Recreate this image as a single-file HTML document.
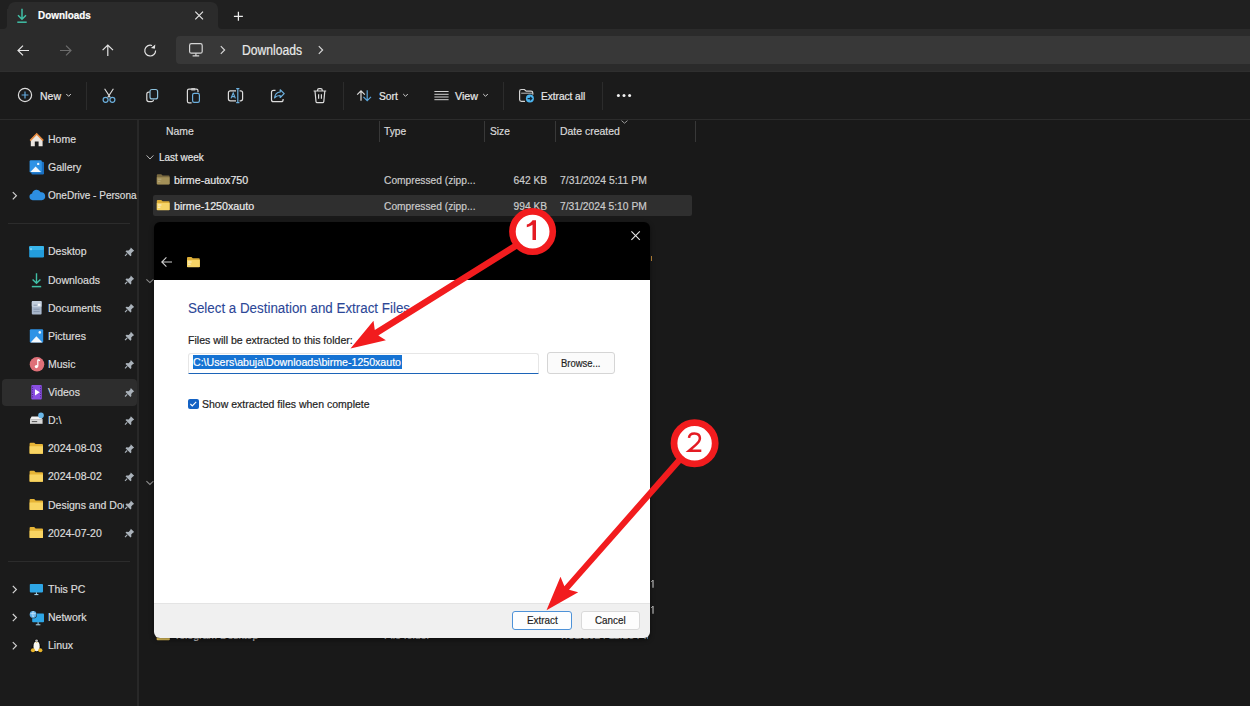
<!DOCTYPE html>
<html><head><meta charset="utf-8"><style>
html,body{margin:0;padding:0;width:1250px;height:706px;overflow:hidden;background:#191919;}
body{position:relative;font-family:"Liberation Sans", sans-serif;}
.r{position:absolute;}
.t{position:absolute;line-height:1;white-space:nowrap;transform-origin:left center;-webkit-text-stroke:0.2px currentColor;}
</style></head><body>
<div class="r" style="left:0px;top:0px;width:1250px;height:72px;background:#2b2b2b;"></div>
<div class="r" style="left:0px;top:0px;width:1250px;height:2px;background:#202020;"></div>
<div class="r" style="left:0px;top:0px;width:7px;height:29px;background:#202020;border-bottom-right-radius:4px;"></div>
<div class="r" style="left:217.5px;top:0px;width:1032.5px;height:29px;background:#202020;border-bottom-left-radius:4px;"></div>
<div class="r" style="left:7px;top:0px;width:8px;height:9px;background:#202020;"></div>
<div class="r" style="left:210px;top:0px;width:8px;height:9px;background:#202020;"></div>
<div class="r" style="left:8px;top:2px;width:209.5px;height:27px;background:#2b2b2b;border-radius:7px 7px 0 0;"></div>
<div class="r" style="left:0px;top:71px;width:1250px;height:1px;background:#2f2f2f;"></div>
<div class="r" style="left:176px;top:36px;width:1074px;height:28px;background:#383838;border-radius:4px 0 0 4px;"></div>
<div class="r" style="left:0px;top:72px;width:1250px;height:48px;background:#1b1b1b;"></div>
<div class="r" style="left:0px;top:119px;width:1250px;height:1.2px;background:#2c2c2c;"></div>
<div class="r" style="left:0px;top:120.2px;width:137px;height:586px;background:#1b1b1b;"></div>
<div class="r" style="left:137px;top:120.2px;width:1.8px;height:586px;background:#282828;"></div>
<div class="r" style="left:138.8px;top:120.2px;width:1111.2px;height:586px;background:#191919;"></div>
<svg class="r" style="left:15px;top:6px;" width="14" height="18" viewBox="0 0 14 18"><path d="M7 2.8v10.5M3 9.2L7 13.2l4-4" stroke="#40bfa6" stroke-width="1.5" fill="none"/><path d="M2.3 16.2h9.4" stroke="#40bfa6" stroke-width="1.5"/></svg>
<div class="t" style="left:38.40px;top:10.29px;font-size:11px;color:#ffffff;font-weight:700;transform:scaleX(0.8999);">Downloads</div>
<svg class="r" style="left:0;top:0;" width="1250" height="706" viewBox="0 0 1250 706"><path d="M195.3 11.7l7.7 7.7M203 11.7l-7.7 7.7" stroke="#e8e8e8" stroke-width="1.15"/><path d="M238.4 11.8v9M233.9 16.3h9" stroke="#ececec" stroke-width="1.25"/></svg>
<svg class="r" style="left:0;top:0;" width="1250" height="706" viewBox="0 0 1250 706"><path d="M18 50.5h11M23 45.6L18 50.5l5 4.9" stroke="#e4e4e4" stroke-width="1.2" fill="none"/><path d="M60 50.5h11M66 45.6l5 4.9-5 4.9" stroke="#6c6c6c" stroke-width="1.2" fill="none"/><path d="M107.8 56V45M102.6 50.2l5.2-5.2 5.2 5.2" stroke="#e4e4e4" stroke-width="1.2" fill="none"/><path d="M155.6 50.4A5.4 5.4 0 1 1 152 45.5" stroke="#e4e4e4" stroke-width="1.2" fill="none"/><polygon points="155.3,44.6 154.9,48.8 150.9,48" fill="#e4e4e4"/><rect x="189.6" y="43.6" width="12.6" height="9.6" rx="1.8" stroke="#d6d6d6" stroke-width="1.2" fill="none"/><path d="M195.9 53.2v2.2M192.6 55.8h6.6" stroke="#d6d6d6" stroke-width="1.2"/><path d="M220.8 46.2l3.8 3.8-3.8 3.8" stroke="#d6d6d6" stroke-width="1.2" fill="none"/><path d="M318.8 46.2l3.8 3.8-3.8 3.8" stroke="#d6d6d6" stroke-width="1.2" fill="none"/></svg>
<div class="t" style="left:241.70px;top:43.15px;font-size:14px;color:#e8e8e8;transform:scaleX(0.8691);">Downloads</div>
<svg class="r" style="left:0;top:0;" width="1250" height="706" viewBox="0 0 1250 706"><circle cx="25" cy="95" r="6.6" stroke="#dcdcdc" stroke-width="1.2" fill="none"/><path d="M25 91.6v6.8M21.6 95h6.8" stroke="#62a8dc" stroke-width="1.2"/><path d="M66.3 94l2.3 2.3 2.3-2.3" stroke="#cfcfcf" stroke-width="1" fill="none"/><path d="M104.6 88.8l5.6 8.6M113.4 88.8l-5.6 8.6" stroke="#dcdcdc" stroke-width="1.1" fill="none"/><circle cx="105.6" cy="99.8" r="2.5" stroke="#6cb0de" stroke-width="1.2" fill="none"/><circle cx="112.4" cy="99.8" r="2.5" stroke="#6cb0de" stroke-width="1.2" fill="none"/><rect x="150" y="89.5" width="7.6" height="9.4" rx="2" stroke="#8cc0dc" stroke-width="1.2" fill="none"/><path d="M149.6 92.2h-0.8a2 2 0 0 0-2 2v5.4a2 2 0 0 0 2 2h2.8a2 2 0 0 0 2-1.8" stroke="#dcdcdc" stroke-width="1.2" fill="none"/><path d="M191 89.2h-2a1.6 1.6 0 0 0-1.6 1.6v10.4a1.6 1.6 0 0 0 1.6 1.6h2.6M195.6 89.2h0.8a1.6 1.6 0 0 1 1.6 1.6v1.5" stroke="#dcdcdc" stroke-width="1.2" fill="none"/><rect x="190.8" y="88" width="5" height="2.6" rx="1.1" fill="#c8c8c8"/><rect x="192.6" y="93.4" width="6.8" height="9" rx="1.6" stroke="#6cb0de" stroke-width="1.2" fill="none"/><path d="M236 90.8h-5.6a2 2 0 0 0-2 2v6a2 2 0 0 0 2 2h5.6M239.6 90.8h1a2 2 0 0 1 2 2v6a2 2 0 0 1-2 2h-1" stroke="#dcdcdc" stroke-width="1.2" fill="none"/><path d="M237.8 88.6v14M236.2 88.6h3.2M236.2 102.6h3.2" stroke="#6cb0de" stroke-width="1.2"/><path d="M231 98.4l2.2-5.4 2.2 5.4M231.8 96.6h2.8" stroke="#6cb0de" stroke-width="1.1" fill="none"/><path d="M275.5 90.3h-2a2 2 0 0 0-2 2v7.4a2 2 0 0 0 2 2h7.6a2 2 0 0 0 2-2v-0.8" stroke="#dcdcdc" stroke-width="1.2" fill="none"/><path d="M284.2 93.6l-4-3.8v2.2c-3 0.2-5.2 2.4-5.6 5.8 1.4-1.6 3.2-2.4 5.6-2.3v2z" stroke="#6cb0de" stroke-width="1.2" fill="none" stroke-linejoin="round"/><path d="M313.6 91h12.6M317.6 91v-1a1.4 1.4 0 0 1 1.4-1.4h1.8a1.4 1.4 0 0 1 1.4 1.4v1M315 91l1 10.6a1.3 1.3 0 0 0 1.3 1.1h5.2a1.3 1.3 0 0 0 1.3-1.1l1-10.6M318.6 94.2v4.6M321.4 94.2v4.6" stroke="#dcdcdc" stroke-width="1.2" fill="none"/><path d="M361 100.8V90.8M357.2 94.6L361 90.8l3.8 3.8" stroke="#dcdcdc" stroke-width="1.2" fill="none"/><path d="M367.2 90.2v10.2M363.4 96.8l3.8 3.8 3.8-3.8" stroke="#5aa6dc" stroke-width="1.2" fill="none"/><path d="M403.2 94l2.3 2.3 2.3-2.3" stroke="#cfcfcf" stroke-width="1" fill="none"/><path d="M434.4 91.5h14.2M434.4 94.3h14.2M434.4 97h14.2M434.4 99.7h14.2" stroke="#d0d0d0" stroke-width="1"/><path d="M483.2 94l2.3 2.3 2.3-2.3" stroke="#cfcfcf" stroke-width="1" fill="none"/><path d="M525 101.3h-3.6a1.8 1.8 0 0 1-1.8-1.8V91.3a1.8 1.8 0 0 1 1.8-1.8h3l1.8 1.7h4.8a1.8 1.8 0 0 1 1.8 1.8v1.8" stroke="#d4d4d4" stroke-width="1.2" fill="none"/><path d="M521.2 93.2h11" stroke="#bdbdbd" stroke-width="1"/><circle cx="529.9" cy="98.6" r="4.6" fill="#1b1b1b"/><circle cx="529.9" cy="98.6" r="4" fill="#4cb4ee"/><path d="M527.6 98.6h4.2M530 96.8l1.9 1.8-1.9 1.8" stroke="#0e2233" stroke-width="1.1" fill="none"/><circle cx="618.4" cy="95.6" r="1.5" fill="#f2f2f2"/><circle cx="624" cy="95.6" r="1.5" fill="#f2f2f2"/><circle cx="629.6" cy="95.6" r="1.5" fill="#f2f2f2"/></svg>
<div class="r" style="left:86px;top:82px;width:1px;height:28px;background:#2c2c2c;"></div>
<div class="r" style="left:343px;top:82px;width:1px;height:28px;background:#2c2c2c;"></div>
<div class="r" style="left:503px;top:82px;width:1px;height:28px;background:#2c2c2c;"></div>
<div class="r" style="left:602px;top:82px;width:1px;height:28px;background:#2c2c2c;"></div>
<div class="t" style="left:39.70px;top:90.59px;font-size:11px;color:#e8e8e8;transform:scaleX(0.9539);">New</div>
<div class="t" style="left:378.60px;top:90.69px;font-size:11px;color:#e8e8e8;transform:scaleX(0.9313);">Sort</div>
<div class="t" style="left:455.00px;top:90.69px;font-size:11px;color:#e8e8e8;transform:scaleX(0.9723);">View</div>
<div class="t" style="left:541.00px;top:90.59px;font-size:11px;color:#e8e8e8;transform:scaleX(0.9152);">Extract all</div>
<div class="r" style="left:1.5px;top:379px;width:135px;height:27px;background:#2d2d2d;border-radius:4px;"></div>
<div class="r" style="left:8px;top:223px;width:122px;height:1px;background:#2c2c2c;"></div>
<div class="r" style="left:8px;top:561px;width:122px;height:1px;background:#2c2c2c;"></div>
<div class="t" style="left:47.60px;top:134.19px;font-size:11px;color:#dcdcdc;transform:scaleX(0.9550);">Home</div>
<div class="t" style="left:47.60px;top:162.19px;font-size:11px;color:#dcdcdc;transform:scaleX(0.9550);">Gallery</div>
<div class="r" style="left:0;top:0;width:136.5px;height:706px;overflow:hidden"><div class="t" style="left:47.60px;top:190.29px;font-size:11px;color:#dcdcdc;transform:scaleX(0.9113);">OneDrive - Persona</div></div>
<div class="t" style="left:47.60px;top:246.39px;font-size:11px;color:#dcdcdc;transform:scaleX(0.9550);">Desktop</div>
<div class="t" style="left:47.60px;top:274.59px;font-size:11px;color:#dcdcdc;transform:scaleX(0.9550);">Downloads</div>
<div class="t" style="left:47.60px;top:302.69px;font-size:11px;color:#dcdcdc;transform:scaleX(0.9550);">Documents</div>
<div class="t" style="left:47.60px;top:330.79px;font-size:11px;color:#dcdcdc;transform:scaleX(0.9550);">Pictures</div>
<div class="t" style="left:47.60px;top:358.99px;font-size:11px;color:#dcdcdc;transform:scaleX(0.9550);">Music</div>
<div class="t" style="left:47.60px;top:387.09px;font-size:11px;color:#dcdcdc;transform:scaleX(0.9550);">Videos</div>
<div class="t" style="left:47.60px;top:415.19px;font-size:11px;color:#dcdcdc;transform:scaleX(0.9550);">D:\</div>
<div class="t" style="left:47.60px;top:443.29px;font-size:11px;color:#dcdcdc;transform:scaleX(0.9550);">2024-08-03</div>
<div class="t" style="left:47.60px;top:471.39px;font-size:11px;color:#dcdcdc;transform:scaleX(0.9550);">2024-08-02</div>
<div class="r" style="left:0;top:0;width:123.5px;height:706px;overflow:hidden"><div class="t" style="left:47.60px;top:499.59px;font-size:11px;color:#dcdcdc;transform:scaleX(0.9550);">Designs and Docs</div></div>
<div class="t" style="left:47.60px;top:527.69px;font-size:11px;color:#dcdcdc;transform:scaleX(0.9550);">2024-07-20</div>
<div class="t" style="left:47.60px;top:584.09px;font-size:11px;color:#dcdcdc;transform:scaleX(0.9550);">This PC</div>
<div class="t" style="left:47.60px;top:612.19px;font-size:11px;color:#dcdcdc;transform:scaleX(0.9550);">Network</div>
<div class="t" style="left:47.60px;top:640.29px;font-size:11px;color:#dcdcdc;transform:scaleX(0.9550);">Linux</div>
<svg class="r" style="left:0;top:0;" width="1250" height="706" viewBox="0 0 1250 706"><path d="M30.8 139.5L36.7 133.8l5.9 5.7V146.2h-4V141.5h-3.8v4.7h-4z" fill="#ebe6e0"/><path d="M29.6 140.1L36.7 132.8l7.1 7.3-1.1 1.1-6-6.1-6 6.1z" fill="#e6893e"/><rect x="31.4" y="161.8" width="12.6" height="12.6" rx="1.2" fill="#1a6fc0"/><rect x="29.6" y="160.3" width="12.2" height="12.2" rx="1.2" fill="#2e93e6"/><path d="M30.4 172L35.6 166.6l5.4 5.4z" fill="#f5f9fd"/><circle cx="38.2" cy="163.9" r="1.2" fill="#e8f4fd"/><path d="M32.6 200.2a3.4 3.4 0 0 1-0.5-6.7 4.6 4.6 0 0 1 8.6-1.2 3.9 3.9 0 0 1 1 7.9z" fill="#2d8fe2"/><rect x="29.2" y="246" width="14.8" height="11.6" rx="1.3" fill="#239ddc"/><rect x="29.2" y="246" width="14.8" height="4" rx="1.3" fill="#3dbcef" opacity="0.8"/><path d="M31 248.2v2" stroke="#c9f0ff" stroke-width="0.9"/><path d="M36.5 273.3v9.8M32.6 279.4l3.9 3.9 3.9-3.9" stroke="#40bfa6" stroke-width="1.4" fill="none"/><path d="M31.8 286.6h9.4" stroke="#40bfa6" stroke-width="1.5"/><rect x="31.8" y="301.1" width="9.8" height="13.3" rx="1" fill="#a9b8cc"/><rect x="31.8" y="301.1" width="9.8" height="6" rx="1" fill="#c3cfdd"/><path d="M33.5 305.2h3.4M33.5 309.2h6.2M33.5 311.6h6.2" stroke="#7f8ea6" stroke-width="0.8"/><rect x="38" y="303.8" width="2.4" height="2" fill="#ffffff"/><rect x="29.8" y="329.2" width="13.4" height="13.4" rx="1.2" fill="#2e93e6"/><path d="M30.6 342.4L36.4 336.2l6 6.2z" fill="#f5f9fd"/><circle cx="39.8" cy="332.4" r="1.3" fill="#e8f4fd"/><circle cx="37" cy="364.3" r="7.3" fill="#df7078"/><path d="M37.8 359.6v6.8M37.8 359.6l2.2 1" stroke="#fff" stroke-width="1.2" fill="none"/><circle cx="36.4" cy="366.6" r="1.6" fill="#fff"/><rect x="31.3" y="385.1" width="10.5" height="14.5" rx="1" fill="#8a4fe2"/><path d="M35 389.2v6.2l4.8-3.1z" fill="#fff"/><path d="M32.6 386.8v11.5M40.5 386.8v11.5" stroke="#4c2490" stroke-width="1" stroke-dasharray="1 1.4"/><path d="M30 419.2h12.6v4.6H30z" fill="#d9d9d9"/><path d="M31.6 416.6h8.4l2.6 2.6H30z" fill="#f2f2f2"/><path d="M31.8 421.6h5.4" stroke="#444" stroke-width="0.9"/><circle cx="41" cy="415.4" r="2.8" fill="#6ab8ea"/><rect x="29.8" y="584" width="13.2" height="8.4" rx="0.8" fill="#2ea6e6"/><path d="M34.4 594.6h4M36.4 592.4v2" stroke="#aadcf5" stroke-width="1"/><rect x="32.2" y="613.5" width="11.8" height="8.7" rx="0.8" fill="#2ea6e6"/><path d="M35.8 624.8h4.6M38.1 622.2v2.4" stroke="#aadcf5" stroke-width="1"/><circle cx="33.1" cy="614.4" r="3.9" fill="#1b1b1b"/><circle cx="33.1" cy="614.4" r="3.4" fill="#5cb0e8"/><path d="M30.4 613.6h5.4M33.1 611.2c-1.2 1.6-1.2 4.2 0 6M33.1 611.2c1.2 1.6 1.2 4.2 0 6" stroke="#dcefff" stroke-width="0.6" fill="none"/><path d="M36.6 638.8c-1.8 0-2.6 1.4-2.6 3.2 0 1.4-2.6 3.6-2.6 6.6 0 1.6 0.8 3 1.6 3.6h7.2c0.8-0.6 1.6-2 1.6-3.6 0-3-2.6-5.2-2.6-6.6 0-1.8-0.8-3.2-2.6-3.2z" fill="#0c0c0c"/><ellipse cx="36.6" cy="646.4" rx="3.1" ry="4.9" fill="#f6f6f0"/><ellipse cx="36.6" cy="640.6" rx="1.4" ry="1.2" fill="#bfbfbf"/><path d="M35.6 642.2h2l-1 0.9z" fill="#e8b020"/><ellipse cx="33" cy="650.2" rx="2.1" ry="2" fill="#e8b42a"/><ellipse cx="40.3" cy="650.2" rx="2.1" ry="2" fill="#e8b42a"/><path d="M29.6 443.7a1 1 0 0 1 1-1h3.6l1.4 1.4h6.4a1 1 0 0 1 1 1V453.7H29.6z" fill="#e6b436"/><path d="M29.6 446.3h13.4v6.6a0.8 0.8 0 0 1-0.8 0.8H30.4a0.8 0.8 0 0 1-0.8-0.8z" fill="#f8d462"/><path d="M29.6 471.8a1 1 0 0 1 1-1h3.6l1.4 1.4h6.4a1 1 0 0 1 1 1V481.8H29.6z" fill="#e6b436"/><path d="M29.6 474.4h13.4v6.6a0.8 0.8 0 0 1-0.8 0.8H30.4a0.8 0.8 0 0 1-0.8-0.8z" fill="#f8d462"/><path d="M29.6 500.0a1 1 0 0 1 1-1h3.6l1.4 1.4h6.4a1 1 0 0 1 1 1V510.0H29.6z" fill="#e6b436"/><path d="M29.6 502.6h13.4v6.6a0.8 0.8 0 0 1-0.8 0.8H30.4a0.8 0.8 0 0 1-0.8-0.8z" fill="#f8d462"/><path d="M29.6 528.1a1 1 0 0 1 1-1h3.6l1.4 1.4h6.4a1 1 0 0 1 1 1V538.1H29.6z" fill="#e6b436"/><path d="M29.6 530.7h13.4v6.6a0.8 0.8 0 0 1-0.8 0.8H30.4a0.8 0.8 0 0 1-0.8-0.8z" fill="#f8d462"/><path d="M12.8 192.1l3.6 3.6-3.6 3.6" stroke="#d4d4d4" stroke-width="1.2" fill="none"/><path d="M12.8 585.9l3.6 3.6-3.6 3.6" stroke="#d4d4d4" stroke-width="1.2" fill="none"/><path d="M12.8 614.0l3.6 3.6-3.6 3.6" stroke="#d4d4d4" stroke-width="1.2" fill="none"/><path d="M12.8 642.1l3.6 3.6-3.6 3.6" stroke="#d4d4d4" stroke-width="1.2" fill="none"/><g transform="translate(124.6 247.0)"><path d="M6.2 0.4l3.4 3.4-1.2 0.6-1.8 1.8 0.2 2.2-0.9 0.9-5-5 0.9-0.9 2.2 0.2 1.8-1.8z" fill="#aab2ba"/><path d="M2.6 6.6L0.4 8.8" stroke="#aab2ba" stroke-width="1.1"/></g><g transform="translate(124.6 275.2)"><path d="M6.2 0.4l3.4 3.4-1.2 0.6-1.8 1.8 0.2 2.2-0.9 0.9-5-5 0.9-0.9 2.2 0.2 1.8-1.8z" fill="#aab2ba"/><path d="M2.6 6.6L0.4 8.8" stroke="#aab2ba" stroke-width="1.1"/></g><g transform="translate(124.6 303.3)"><path d="M6.2 0.4l3.4 3.4-1.2 0.6-1.8 1.8 0.2 2.2-0.9 0.9-5-5 0.9-0.9 2.2 0.2 1.8-1.8z" fill="#aab2ba"/><path d="M2.6 6.6L0.4 8.8" stroke="#aab2ba" stroke-width="1.1"/></g><g transform="translate(124.6 331.4)"><path d="M6.2 0.4l3.4 3.4-1.2 0.6-1.8 1.8 0.2 2.2-0.9 0.9-5-5 0.9-0.9 2.2 0.2 1.8-1.8z" fill="#aab2ba"/><path d="M2.6 6.6L0.4 8.8" stroke="#aab2ba" stroke-width="1.1"/></g><g transform="translate(124.6 359.6)"><path d="M6.2 0.4l3.4 3.4-1.2 0.6-1.8 1.8 0.2 2.2-0.9 0.9-5-5 0.9-0.9 2.2 0.2 1.8-1.8z" fill="#aab2ba"/><path d="M2.6 6.6L0.4 8.8" stroke="#aab2ba" stroke-width="1.1"/></g><g transform="translate(124.6 387.7)"><path d="M6.2 0.4l3.4 3.4-1.2 0.6-1.8 1.8 0.2 2.2-0.9 0.9-5-5 0.9-0.9 2.2 0.2 1.8-1.8z" fill="#aab2ba"/><path d="M2.6 6.6L0.4 8.8" stroke="#aab2ba" stroke-width="1.1"/></g><g transform="translate(124.6 415.8)"><path d="M6.2 0.4l3.4 3.4-1.2 0.6-1.8 1.8 0.2 2.2-0.9 0.9-5-5 0.9-0.9 2.2 0.2 1.8-1.8z" fill="#aab2ba"/><path d="M2.6 6.6L0.4 8.8" stroke="#aab2ba" stroke-width="1.1"/></g><g transform="translate(124.6 443.9)"><path d="M6.2 0.4l3.4 3.4-1.2 0.6-1.8 1.8 0.2 2.2-0.9 0.9-5-5 0.9-0.9 2.2 0.2 1.8-1.8z" fill="#aab2ba"/><path d="M2.6 6.6L0.4 8.8" stroke="#aab2ba" stroke-width="1.1"/></g><g transform="translate(124.6 472.0)"><path d="M6.2 0.4l3.4 3.4-1.2 0.6-1.8 1.8 0.2 2.2-0.9 0.9-5-5 0.9-0.9 2.2 0.2 1.8-1.8z" fill="#aab2ba"/><path d="M2.6 6.6L0.4 8.8" stroke="#aab2ba" stroke-width="1.1"/></g><g transform="translate(124.6 500.2)"><path d="M6.2 0.4l3.4 3.4-1.2 0.6-1.8 1.8 0.2 2.2-0.9 0.9-5-5 0.9-0.9 2.2 0.2 1.8-1.8z" fill="#aab2ba"/><path d="M2.6 6.6L0.4 8.8" stroke="#aab2ba" stroke-width="1.1"/></g><g transform="translate(124.6 528.3)"><path d="M6.2 0.4l3.4 3.4-1.2 0.6-1.8 1.8 0.2 2.2-0.9 0.9-5-5 0.9-0.9 2.2 0.2 1.8-1.8z" fill="#aab2ba"/><path d="M2.6 6.6L0.4 8.8" stroke="#aab2ba" stroke-width="1.1"/></g></svg>
<div class="t" style="left:166.10px;top:125.59px;font-size:11px;color:#dadada;transform:scaleX(0.9474);">Name</div>
<div class="t" style="left:384.00px;top:125.59px;font-size:11px;color:#dadada;transform:scaleX(0.9300);">Type</div>
<div class="t" style="left:489.70px;top:125.59px;font-size:11px;color:#dadada;transform:scaleX(0.9300);">Size</div>
<div class="t" style="left:559.90px;top:125.59px;font-size:11px;color:#dadada;transform:scaleX(0.9494);">Date created</div>
<div class="r" style="left:378.5px;top:121px;width:1px;height:20.5px;background:#383838;"></div>
<div class="r" style="left:483.5px;top:121px;width:1px;height:20.5px;background:#383838;"></div>
<div class="r" style="left:554.5px;top:121px;width:1px;height:20.5px;background:#383838;"></div>
<div class="r" style="left:694.5px;top:121px;width:1px;height:20.5px;background:#383838;"></div>
<svg class="r" style="left:0;top:0;" width="1250" height="706" viewBox="0 0 1250 706"><path d="M621.5 120.6l3 2.6 3-2.6" stroke="#9a9a9a" stroke-width="1" fill="none"/><path d="M146.6 155.4l3.4 3.6 3.4-3.6" stroke="#b8b8b8" stroke-width="1" fill="none"/><path d="M146.4 279.4l3.5 3.2 3.5-3.2" stroke="#8e8e8e" stroke-width="1.1" fill="none"/><path d="M146.4 481.2l3.5 3.2 3.5-3.2" stroke="#8e8e8e" stroke-width="1.1" fill="none"/></svg>
<div class="t" style="left:158.80px;top:152.29px;font-size:11px;color:#e6e6e6;transform:scaleX(0.9004);">Last week</div>
<div class="r" style="left:153px;top:195px;width:539px;height:21px;background:#2f2f2f;border-radius:2px;"></div>
<svg class="r" style="left:0;top:0;" width="1250" height="706" viewBox="0 0 1250 706"><path d="M156.8 175.2a1 1 0 0 1 1-1h3.4l1.4 1.3h6a1 1 0 0 1 1 1V184.2H156.8z" fill="#7a6a40"/><path d="M156.8 177.2h12.8v6.4a0.8 0.8 0 0 1-0.8 0.8H157.60000000000002a0.8 0.8 0 0 1-0.8-0.8z" fill="#a39058"/><path d="M157.8 179.2h3.6M157.8 181.39999999999998h2.6" stroke="#b8ab80" stroke-width="1"/><path d="M156.8 201a1 1 0 0 1 1-1h3.4l1.4 1.3h6a1 1 0 0 1 1 1V210H156.8z" fill="#dcae38"/><path d="M156.8 203h12.8v6.4a0.8 0.8 0 0 1-0.8 0.8H157.60000000000002a0.8 0.8 0 0 1-0.8-0.8z" fill="#f6d466"/><path d="M157.8 205h3.6M157.8 207.2h2.6" stroke="#fbf4d8" stroke-width="1"/><path d="M156.8 631a1 1 0 0 1 1-1h3.4l1.4 1.3h6a1 1 0 0 1 1 1V640H156.8z" fill="#dcae38"/><path d="M156.8 633h12.8v6.4a0.8 0.8 0 0 1-0.8 0.8H157.60000000000002a0.8 0.8 0 0 1-0.8-0.8z" fill="#f6d466"/><path d="M157.8 635h3.6M157.8 637.2h2.6" stroke="#fbf4d8" stroke-width="1"/></svg>
<div class="t" style="left:174.00px;top:175.09px;font-size:11px;color:#e6e6e6;transform:scaleX(0.9707);">birme-autox750</div>
<div class="t" style="left:174.00px;top:201.19px;font-size:11px;color:#ececec;transform:scaleX(0.9700);">birme-1250xauto</div>
<div class="t" style="left:384.00px;top:175.09px;font-size:11px;color:#cccccc;transform:scaleX(0.9295);">Compressed (zipp...</div>
<div class="t" style="right:702.60px;top:175.09px;font-size:11px;color:#cccccc;transform-origin:right center;transform:scaleX(0.9300);">642 KB</div>
<div class="t" style="left:559.90px;top:175.09px;font-size:11px;color:#cccccc;transform:scaleX(0.9419);">7/31/2024 5:11 PM</div>
<div class="t" style="left:384.00px;top:201.19px;font-size:11px;color:#cccccc;transform:scaleX(0.9295);">Compressed (zipp...</div>
<div class="t" style="right:702.60px;top:201.19px;font-size:11px;color:#cccccc;transform-origin:right center;transform:scaleX(0.9300);">994 KB</div>
<div class="t" style="left:559.90px;top:201.19px;font-size:11px;color:#cccccc;transform:scaleX(0.9336);">7/31/2024 5:10 PM</div>
<div class="t" style="left:174.00px;top:629.89px;font-size:11px;color:#cccccc;transform:scaleX(0.9500);">Telegram Desktop</div>
<div class="t" style="left:384.00px;top:629.89px;font-size:11px;color:#cccccc;transform:scaleX(0.9500);">File folder</div>
<div class="r" style="left:0;top:0;width:648px;height:706px;overflow:hidden"><div class="t" style="left:559.90px;top:629.89px;font-size:11px;color:#cccccc;transform:scaleX(0.9400);">7/31/2024 11:16 PM</div></div>
<svg class="r" style="left:0;top:0;" width="1250" height="706" viewBox="0 0 1250 706"><path d="M653 580v7.8M653 606v7.8" stroke="#b8b8b8" stroke-width="1.2"/><path d="M651.2 581.8l1.8-1.6M651.2 607.8l1.8-1.6" stroke="#b8b8b8" stroke-width="1"/></svg>
<div class="r" style="left:651px;top:255.5px;width:1px;height:5px;background:#c08a3a;"></div>
<div class="r" style="left:153.5px;top:222px;width:496.5px;height:416px;border-radius:6px;overflow:hidden;background:#000;box-shadow:0 2px 5px rgba(0,0,0,0.45);"><div class="r" style="left:0;top:58px;width:497px;height:323px;background:#fff"></div><div class="r" style="left:0;top:380.5px;width:497px;height:36px;background:#f0f0f0;border-top:1px solid #e4e4e4;box-sizing:border-box"></div></div>
<svg class="r" style="left:0;top:0;" width="1250" height="706" viewBox="0 0 1250 706"><path d="M162 262h10M166.4 257.4L161.8 262l4.6 4.6" stroke="#cfcfcf" stroke-width="1.1" fill="none"/><path d="M187 258a1 1 0 0 1 1-1h3.4l1.4 1.3h6a1 1 0 0 1 1 1V267H187z" fill="#dcae38"/><path d="M187 260h12.8v6.4a0.8 0.8 0 0 1-0.8 0.8H187.8a0.8 0.8 0 0 1-0.8-0.8z" fill="#f6d466"/><path d="M188 262h3.6M188 264.2h2.6" stroke="#fbf4d8" stroke-width="1"/><path d="M631.4 231.4l8.4 8.4M639.8 231.4l-8.4 8.4" stroke="#e6e6e6" stroke-width="1.1"/></svg>
<div class="t" style="left:188.00px;top:301.15px;font-size:14px;color:#2c4797;transform:scaleX(0.9541);-webkit-text-stroke:0.1px currentColor;">Select a Destination and Extract Files</div>
<div class="t" style="left:188.00px;top:335.39px;font-size:11px;color:#1e1e1e;transform:scaleX(0.9627);">Files will be extracted to this folder:</div>
<div class="r" style="left:187.9px;top:353.3px;width:351px;height:20.7px;background:#ffffff;border:1px solid #e6e6e6;border-bottom:1.6px solid #1c64b8;box-sizing:border-box;border-radius:3px 3px 0 0;"></div>
<div class="r" style="left:192.7px;top:355.1px;width:209px;height:13.8px;background:#1673d3;"></div>
<div class="t" style="left:193.00px;top:356.69px;font-size:11px;color:#ffffff;transform:scaleX(0.9637);">C:\Users\abuja\Downloads\birme-1250xauto</div>
<div class="r" style="left:547.4px;top:352px;width:68px;height:22.3px;background:#fbfbfb;border:1px solid #d5d5d5;box-sizing:border-box;border-radius:3px;"></div>
<div class="t" style="left:561.30px;top:357.69px;font-size:11px;color:#1e1e1e;transform:scaleX(0.8613);">Browse...</div>
<div class="r" style="left:187.7px;top:398.6px;width:11.3px;height:10.6px;background:#1462c4;border-radius:2px;"></div>
<svg class="r" style="left:0;top:0;" width="1250" height="706" viewBox="0 0 1250 706"><path d="M190.4 404l1.9 1.9 3.9-4" stroke="#fff" stroke-width="1.1" fill="none"/></svg>
<div class="t" style="left:202.00px;top:398.89px;font-size:11px;color:#1e1e1e;transform:scaleX(0.9551);">Show extracted files when complete</div>
<div class="r" style="left:512.2px;top:611.4px;width:59.8px;height:18.4px;background:#fdfeff;border:1px solid #4d92d8;box-sizing:border-box;border-radius:3px;"></div>
<div class="t" style="left:526.50px;top:615.39px;font-size:11px;color:#1e1e1e;transform:scaleX(0.8997);">Extract</div>
<div class="r" style="left:580.5px;top:611.4px;width:59.8px;height:18.4px;background:#fdfdfd;border:1px solid #d9d9d9;box-sizing:border-box;border-radius:3px;"></div>
<div class="t" style="left:594.80px;top:615.39px;font-size:11px;color:#1e1e1e;transform:scaleX(0.8934);">Cancel</div>
<svg class="r" style="left:0;top:0;z-index:5;" width="1250" height="706" viewBox="0 0 1250 706"><path d="M350.5,348.6 L373.5,320.8 L374.8,330.1 L519.3,239.7 L522.7,245.3 L378.3,335.5 L385.9,340.3Z" fill="#f21c1e"/><circle cx="532.6" cy="231.6" r="20.2" fill="#fff" stroke="#f21c1e" stroke-width="6.6"/><path d="M536 220.2V240h-3.5V224.8c-1.6 1.2-3.6 2-5.7 2.4v-2.6c2.3-0.6 4.3-2 5.8-4.4z" fill="#e41b23"/><path d="M546.5,610.3 L560.5,576.7 L564.4,586.2 L676.6,458.4 L681.4,462.6 L569.0,589.8 L578.2,592.3Z" fill="#f21c1e"/><circle cx="694.6" cy="443.3" r="20.6" fill="#fff" stroke="#f21c1e" stroke-width="6.8"/><path d="M689 437.9c0.2-3.1 2.4-4.5 5.4-4.5 3.4 0 5.5 2 5.5 4.9 0 2.5-1.3 4.2-4.1 6.6L689 450.7h12.3" stroke="#e41b23" stroke-width="2.5" fill="none"/></svg>
</body></html>
